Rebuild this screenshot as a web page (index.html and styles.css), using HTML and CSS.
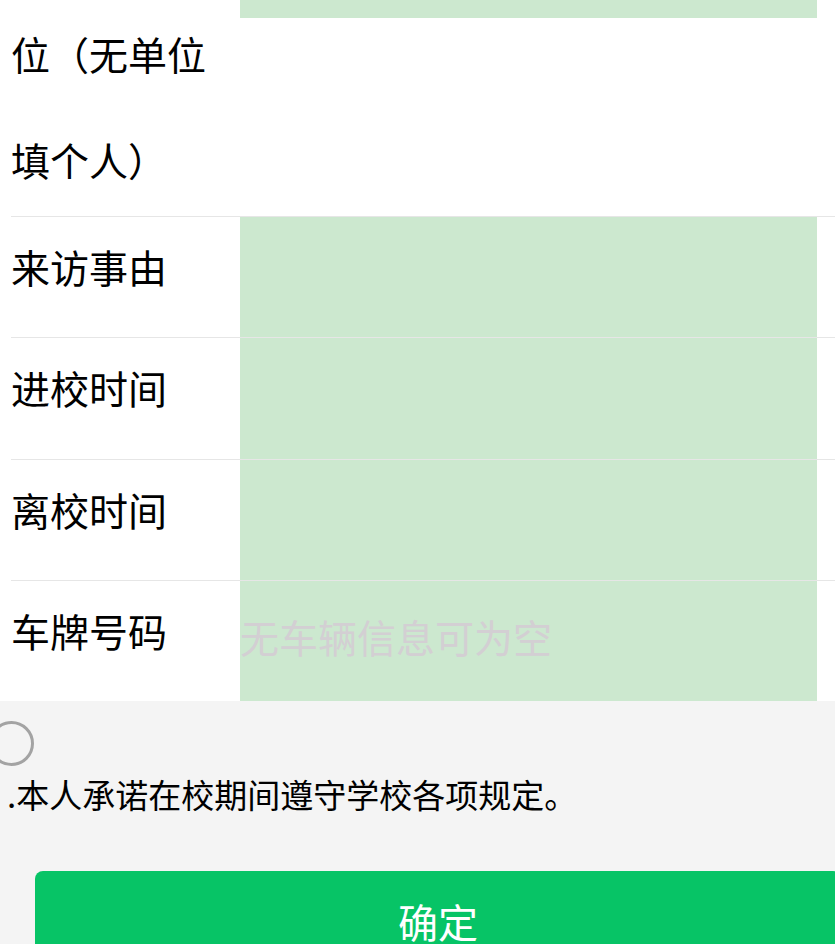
FILE: index.html
```html
<!DOCTYPE html>
<html lang="zh-CN">
<head>
    <meta charset="UTF-8">
    <meta name="viewport" content="width=device-width, initial-scale=1.0">
    <title>来访登记</title>
    <link rel="stylesheet" href="styles.css">
</head>
<body>
    <div class="page">
        <form class="visit-form" id="visitForm">
            <div class="form-row">
                <label for="company">所在工作单位（无单位填个人）</label>
                <input type="text" id="company" name="company">
            </div>
            <div class="form-row">
                <label for="reason">来访事由</label>
                <input type="text" id="reason" name="reason">
            </div>
            <div class="form-row">
                <label for="inTime">进校时间</label>
                <input type="text" id="inTime" name="inTime">
            </div>
            <div class="form-row">
                <label for="outTime">离校时间</label>
                <input type="text" id="outTime" name="outTime">
            </div>
            <div class="form-row">
                <label for="plate">车牌号码</label>
                <input type="text" id="plate" name="plate" placeholder="无车辆信息可为空">
            </div>
        </form>
        <div class="agree">
            <span class="radio"></span>
            <p class="agree-text">.本人承诺在校期间遵守学校各项规定。</p>
        </div>
        <button type="submit" form="visitForm" class="submit-btn">确定</button>
    </div>
</body>
</html>
```

FILE: styles.css
```css
html, body {
    margin: 0;
    padding: 0;
}
body {
    font-family: "Noto Sans CJK SC", "Noto Sans", sans-serif;
    background-color: #f4f4f4;
    color: #000;
    overflow-x: hidden;
}
.page {
    width: 835px;
}
/* page is scrolled down a little, first row starts above the top */
.visit-form {
    margin-top: -103px;
    background-color: #fff;
}
.form-row {
    display: flex;
    align-items: flex-start;
    margin-left: 11px;
    border-top: 1px solid #e6e6e6;
}
.form-row label {
    flex: none;
    width: 229px;
    margin: -4px 0 4px;
    font-size: 39px;
    line-height: 106px;
}
.form-row input {
    flex: none;
    width: 577px;
    height: 120.25px;
    box-sizing: border-box;
    margin: 0;
    padding: 0 0 10px;
    border: none;
    outline: none;
    background-color: #cce8cf;
    font-family: inherit;
    font-size: 39px;
    color: #000;
}
.form-row input::placeholder {
    color: #d3cfd3;
}
.agree {
    padding: 20px 0 0 7px;
}
.radio {
    display: block;
    width: 45px;
    height: 45px;
    margin-left: -18px;
    box-sizing: border-box;
    border: 3px solid #a3a3a3;
    border-radius: 50%;
}
.agree-text {
    margin: 3px 0 0;
    font-size: 33px;
    line-height: 50px;
}
.submit-btn {
    display: block;
    width: 806px;
    height: 100px;
    margin: 52px 0 0 35px;
    padding: 0;
    border: none;
    border-radius: 8px;
    background-color: #07c466;
    color: #fff;
    font-family: inherit;
    font-size: 40px;
    line-height: 100px;
    cursor: pointer;
}
```
